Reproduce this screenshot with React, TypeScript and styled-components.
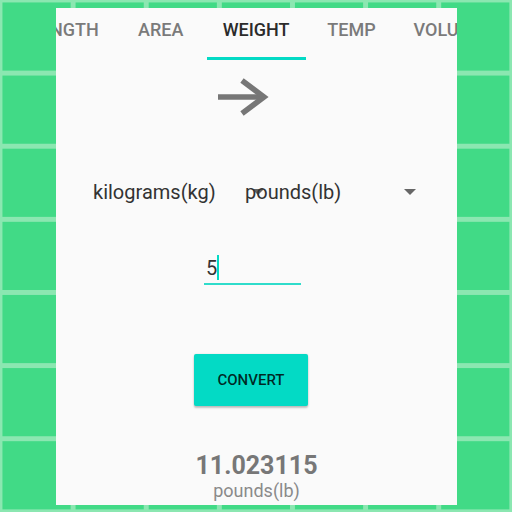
import React from "react";
import styled, { createGlobalStyle } from "styled-components";

const Global = createGlobalStyle`
  html, body { margin: 0; padding: 0; }
  body {
    width: 512px;
    height: 512px;
    overflow: hidden;
    font-family: Roboto, "Liberation Sans", sans-serif;
    background-color: #41da86;
    background-image:
      linear-gradient(to right, #8be7b1 5px, transparent 5px),
      linear-gradient(to bottom, #8be7b1 5px, transparent 5px);
    background-size: 73.14px 73.14px;
    background-position: -2.5px -2.5px;
  }
`;

const Stage = styled.div`
  width: 512px;
  height: 512px;
  padding: 8px 0 0 56px;
  box-sizing: border-box;
`;

const Panel = styled.div`
  width: 401px;
  height: 497px;
  background: #fafafa;
  display: flex;
  flex-direction: column;
  overflow: hidden;
`;

const TabBar = styled.div`
  height: 52px;
  overflow: hidden;
  flex-shrink: 0;
`;

const TabStrip = styled.div`
  display: flex;
  height: 100%;
  margin-left: -42px;
`;

const Tab = styled.div<{ $active?: boolean }>`
  position: relative;
  min-width: 92px;
  padding: 11px 16px 0;
  box-sizing: border-box;
  flex-shrink: 0;
  text-align: center;
  font-size: 18px;
  font-weight: 500;
  white-space: nowrap;
  color: ${(p) => (p.$active ? "#2b2b2b" : "#7a7a7a")};
  &::after {
    content: "";
    display: ${(p) => (p.$active ? "block" : "none")};
    position: absolute;
    left: 0;
    right: 0;
    bottom: 0;
    height: 3px;
    background: #03dac5;
  }
`;

const ArrowIcon = styled.svg`
  display: block;
  margin: 17px 0 0 161px;
  flex-shrink: 0;
`;

const SpinnerRow = styled.div`
  display: flex;
  margin: 63px 0 0 37px;
  flex-shrink: 0;
`;

const Spinner = styled.div`
  position: relative;
  width: 152px;
  font-size: 20px;
  color: #333;
  white-space: nowrap;
`;

const SpinnerText = styled.span`
  position: relative;
  z-index: 1;
`;

const Caret = styled.span`
  position: absolute;
  left: 159px;
  top: 9px;
  width: 0;
  height: 0;
  border-left: 6px solid transparent;
  border-right: 6px solid transparent;
  border-top: 6px solid #666;
`;

const InputBox = styled.div`
  width: 97px;
  margin: 47px 0 0 148px;
  padding: 4px 0 3px 2px;
  box-sizing: border-box;
  font-size: 20px;
  line-height: 24px;
  color: #333;
  border-bottom: 2px solid #2fdccb;
  display: flex;
  align-items: center;
  flex-shrink: 0;
`;

const Cursor = styled.span`
  display: inline-block;
  width: 2px;
  height: 25px;
  background: #03dac5;
`;

const ConvertButton = styled.button`
  margin: 69px 0 0 138px;
  width: 114px;
  height: 52px;
  border: none;
  border-radius: 2px;
  background: #03dac5;
  box-shadow: 0 2px 2px rgba(0, 0, 0, 0.22), 0 0 2px rgba(0, 0, 0, 0.12);
  font-family: Roboto, "Liberation Sans", sans-serif;
  font-size: 15px;
  font-weight: 500;
  color: rgba(0, 0, 0, 0.82);
  padding: 0;
  flex-shrink: 0;
`;

const ResultValue = styled.div`
  margin-top: 45px;
  text-align: center;
  font-size: 25px;
  font-weight: 700;
  color: #777;
`;

const ResultUnit = styled.div`
  text-align: center;
  font-size: 18px;
  color: #8a8a8a;
`;

const tabs = ["LENGTH", "AREA", "WEIGHT", "TEMP", "VOLUME"];

export default function App() {
  return (
    <>
      <Global />
      <Stage>
        <Panel>
          <TabBar>
            <TabStrip>
              {tabs.map((t) => (
                <Tab key={t} $active={t === "WEIGHT"}>
                  {t}
                </Tab>
              ))}
            </TabStrip>
          </TabBar>
          <ArrowIcon width="54" height="40" viewBox="0 0 54 40">
            <g fill="none" stroke="#767676" strokeWidth="5.5" strokeLinejoin="miter">
              <line x1="1" y1="20" x2="47" y2="20" />
              <polyline points="25,3.5 47,20 25,36.5" />
            </g>
          </ArrowIcon>
          <SpinnerRow>
            <Spinner>
              <Caret />
              <SpinnerText>kilograms(kg)</SpinnerText>
            </Spinner>
            <Spinner>
              <Caret />
              <SpinnerText>pounds(lb)</SpinnerText>
            </Spinner>
          </SpinnerRow>
          <InputBox>
            5<Cursor />
          </InputBox>
          <ConvertButton>CONVERT</ConvertButton>
          <ResultValue>11.023115</ResultValue>
          <ResultUnit>pounds(lb)</ResultUnit>
        </Panel>
      </Stage>
    </>
  );
}
